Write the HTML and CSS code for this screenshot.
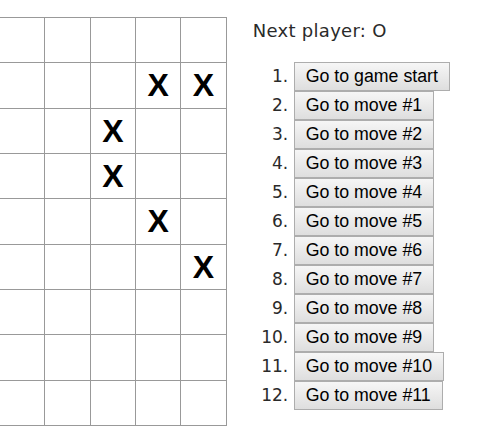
FILE: index.html
```html
<!DOCTYPE html>
<html>
<head>
<meta charset="utf-8">
<link rel="stylesheet" href="styles.css">
</head>
<body>
<div class="game">
  <div class="board">
    <div class="row"><span class="sq"></span><span class="sq"></span><span class="sq"></span><span class="sq"></span><span class="sq"></span></div>
    <div class="row"><span class="sq"></span><span class="sq"></span><span class="sq"></span><span class="sq">X</span><span class="sq">X</span></div>
    <div class="row"><span class="sq"></span><span class="sq"></span><span class="sq">X</span><span class="sq"></span><span class="sq"></span></div>
    <div class="row"><span class="sq"></span><span class="sq"></span><span class="sq">X</span><span class="sq"></span><span class="sq"></span></div>
    <div class="row"><span class="sq"></span><span class="sq"></span><span class="sq"></span><span class="sq">X</span><span class="sq"></span></div>
    <div class="row"><span class="sq"></span><span class="sq"></span><span class="sq"></span><span class="sq"></span><span class="sq">X</span></div>
    <div class="row"><span class="sq"></span><span class="sq"></span><span class="sq"></span><span class="sq"></span><span class="sq"></span></div>
    <div class="row"><span class="sq"></span><span class="sq"></span><span class="sq"></span><span class="sq"></span><span class="sq"></span></div>
    <div class="row"><span class="sq"></span><span class="sq"></span><span class="sq"></span><span class="sq"></span><span class="sq"></span></div>
    <div class="row"><span class="sq"></span><span class="sq"></span><span class="sq"></span><span class="sq"></span><span class="sq"></span></div>
  </div>
  <div class="info">
    <div class="status">Next player: O</div>
    <ol class="moves">
      <li><button class="btn">Go to game start</button></li>
      <li><button class="btn">Go to move #1</button></li>
      <li><button class="btn">Go to move #2</button></li>
      <li><button class="btn">Go to move #3</button></li>
      <li><button class="btn">Go to move #4</button></li>
      <li><button class="btn">Go to move #5</button></li>
      <li><button class="btn">Go to move #6</button></li>
      <li><button class="btn">Go to move #7</button></li>
      <li><button class="btn">Go to move #8</button></li>
      <li><button class="btn">Go to move #9</button></li>
      <li><button class="btn">Go to move #10</button></li>
      <li><button class="btn">Go to move #11</button></li>
    </ol>
  </div>
</div>
</body>
</html>
```
FILE: styles.css
```css
html, body {
  margin: 0;
  padding: 0;
  background: #fff;
  overflow: hidden;
}
body {
  font-family: "DejaVu Sans", sans-serif;
  font-size: 16px;
  color: #2a2a2a;
}
.game {
  display: flex;
  flex-direction: row;
  padding-top: 17px;
  height: 409px;
  overflow: hidden;
}
.board {
  margin-left: -1px;
  flex: none;
}
.row {
  display: flex;
  height: 46.33px;
  margin-top: -1px;
}
.row:first-child {
  margin-top: 0;
}
.sq {
  box-sizing: border-box;
  width: 46.33px;
  height: 46.33px;
  border: 1px solid #999;
  margin-right: -1px;
  font-family: "Liberation Sans", Arial, sans-serif;
  font-weight: bold;
  font-size: 32px;
  line-height: 44px;
  text-align: center;
  background: #fff;
  color: #000;
}
.info {
  margin-left: 27px;
  margin-top: 2px;
}
.status {
  font-size: 18px;
  letter-spacing: 0.3px;
  line-height: 24px;
}
.moves {
  margin: 19px 0 0 0;
  padding-left: 41px;
}
.moves li {
  height: 29.04px;
  line-height: 29px;
}
.moves li::marker {
  font-size: 17px;
}
.btn {
  font-family: "Liberation Sans", Arial, sans-serif;
  font-size: 17.78px;
  height: 28.5px;
  padding: 0 11px;
  border: 1px solid #adadad;
  border-radius: 0;
  background: linear-gradient(#f6f6f6, #dedede);
  color: #000;
  vertical-align: top;
}
```
